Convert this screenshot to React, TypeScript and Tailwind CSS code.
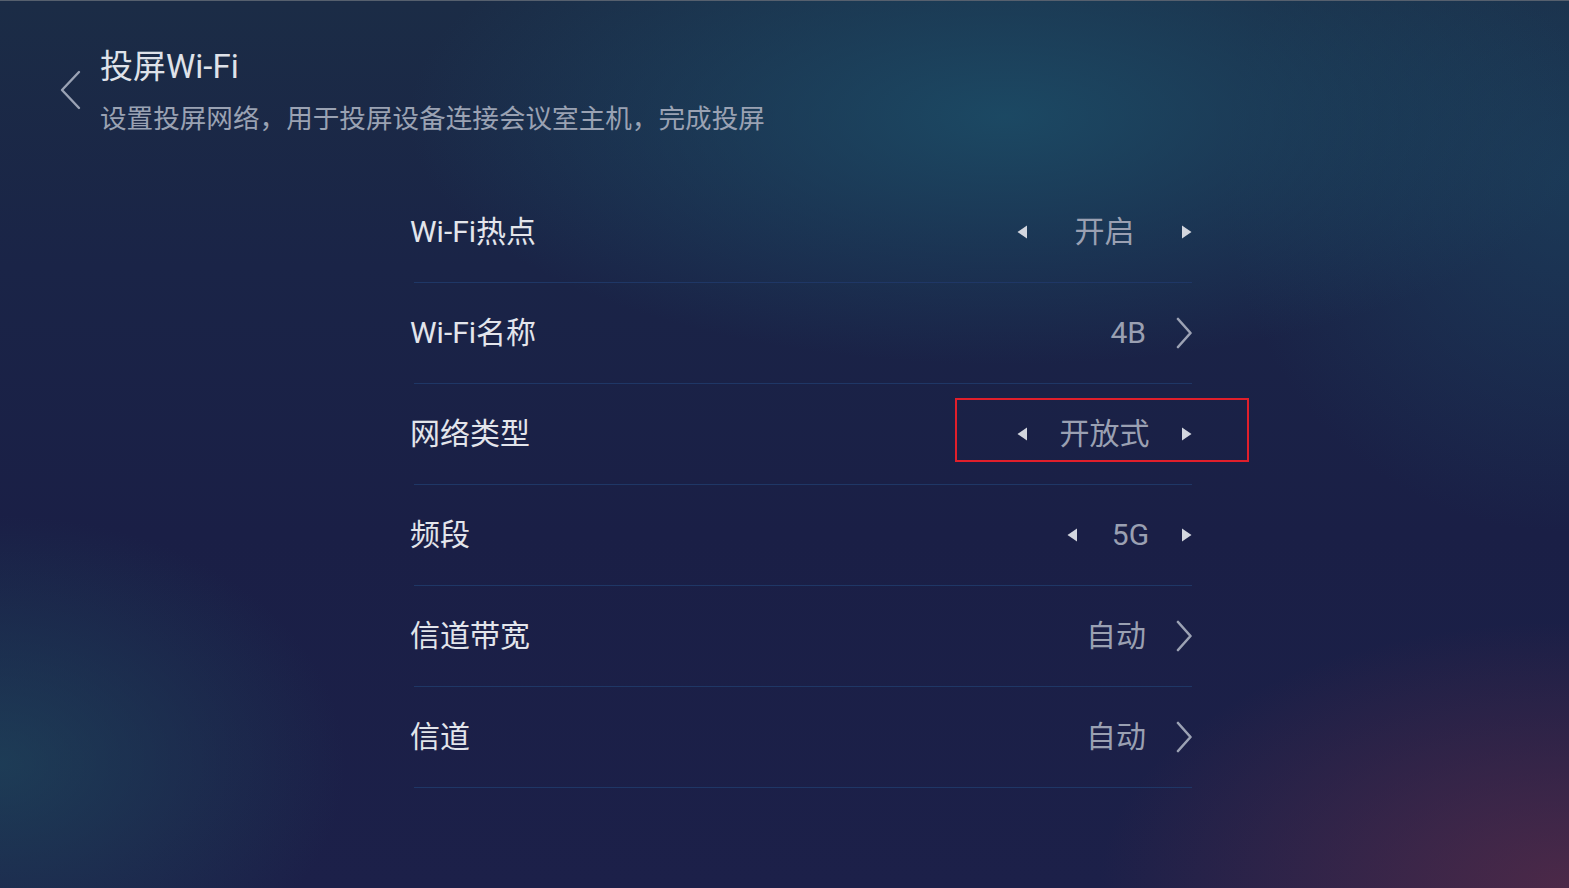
import React from "react";

type Row =
  | { label: string; kind: "toggle"; value: string; wide: boolean; focused?: boolean }
  | { label: string; kind: "link"; value: string };

const rows: Row[] = [
  { label: "Wi-Fi热点", kind: "toggle", value: "开启", wide: true },
  { label: "Wi-Fi名称", kind: "link", value: "4B" },
  { label: "网络类型", kind: "toggle", value: "开放式", wide: true, focused: true },
  { label: "频段", kind: "toggle", value: "5G", wide: false },
  { label: "信道带宽", kind: "link", value: "自动" },
  { label: "信道", kind: "link", value: "自动" },
];

function TriLeft() {
  return (
    <svg width="10" height="14" viewBox="0 0 10 14" className="shrink-0">
      <path d="M10 0.5 L0.5 7 L10 13.5 Z" fill="#d3d6de" />
    </svg>
  );
}

function TriRight() {
  return (
    <svg width="10" height="14" viewBox="0 0 10 14" className="shrink-0">
      <path d="M0 0.5 L9.5 7 L0 13.5 Z" fill="#d3d6de" />
    </svg>
  );
}

function Chevron() {
  return (
    <svg width="18" height="32" viewBox="0 0 18 32" className="shrink-0">
      <path d="M4 2 L16.5 16 L4 30" fill="none" stroke="#9ca2b4" strokeWidth="2.6" strokeLinecap="round" strokeLinejoin="round" />
    </svg>
  );
}

function SettingRow({ row }: { row: Row }) {
  return (
    <div className="relative flex flex-col">
      <div className="flex h-[100px] items-center justify-between">
        <span className="text-[30px] leading-none text-[#e3e5eb]">{row.label}</span>
        {row.kind === "toggle" ? (
          <div className="flex items-center">
            <TriLeft />
            <span
              className={
                row.wide
                  ? "w-[155px] text-center text-[30px] leading-none text-[#9aa0b2]"
                  : "w-[105px] pl-[2px] text-center text-[30px] leading-none text-[#9aa0b2]"
              }
            >
              {row.value}
            </span>
            <TriRight />
          </div>
        ) : (
          <div className="flex items-center gap-[28px]">
            <span className="text-[30px] leading-none text-[#9aa0b2]">{row.value}</span>
            <Chevron />
          </div>
        )}
      </div>
      <div className="ml-1 h-px bg-[#1f3766]" />
      {"focused" in row && row.focused && (
        <div className="absolute left-[545px] top-[14px] h-[64px] w-[294px] border-2 border-[#e01f2b]" />
      )}
    </div>
  );
}

export default function App() {
  return (
    <div className="h-[888px] w-full overflow-hidden border-t border-[#56606e] bg-[radial-gradient(ellipse_38%_28%_at_64%_13%,rgba(28,78,104,0.85),transparent),radial-gradient(ellipse_22%_28%_at_0%_86%,rgba(30,72,92,0.7),transparent),radial-gradient(ellipse_30%_30%_at_100%_100%,rgba(92,44,72,0.75),transparent),radial-gradient(ellipse_22%_40%_at_100%_20%,rgba(28,70,98,0.6),transparent),linear-gradient(180deg,#1b2c46_0%,#1a2447_30%,#1a1f46_60%,#1c2049_100%)] font-['Roboto','Noto_Sans_CJK_SC',sans-serif]">
      <header className="flex pl-[58px] pt-[46px]">
        <div className="pt-[23px]">
          <svg width="24" height="40" viewBox="0 0 24 40">
            <path d="M21 2 L4 20 L21 38" fill="none" stroke="#9aa2b4" strokeWidth="2.4" strokeLinecap="round" strokeLinejoin="round" />
          </svg>
        </div>
        <div className="ml-[18px] flex flex-col">
          <h1 className="text-[33px] leading-[40px] text-[#dfe2e9]">投屏Wi-Fi</h1>
          <p className="mt-[14px] text-[26.6px] leading-[36px] text-[#9aa2b3]">
            设置投屏网络，用于投屏设备连接会议室主机，完成投屏
          </p>
        </div>
      </header>
      <main className="ml-[410px] mt-[45px] w-[782px]">
        {rows.map((row, i) => (
          <SettingRow key={i} row={row} />
        ))}
      </main>
    </div>
  );
}
